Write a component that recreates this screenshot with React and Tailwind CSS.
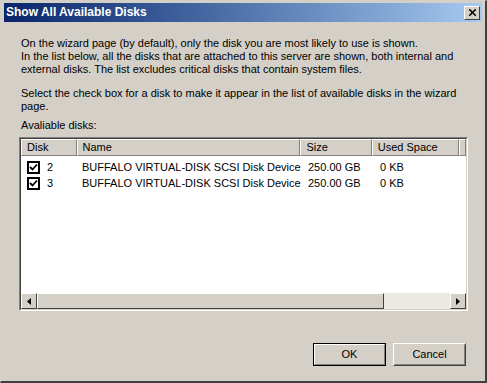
import { X } from 'lucide-react'

const disks = [
  { id: 2, name: 'BUFFALO VIRTUAL-DISK SCSI Disk Device', size: '250.00 GB', used: '0 KB' },
  { id: 3, name: 'BUFFALO VIRTUAL-DISK SCSI Disk Device', size: '250.00 GB', used: '0 KB' },
]

function Check() {
  return (
    <span className="inline-flex h-[13px] w-[13px] items-center justify-center border-2 border-black bg-white">
      <svg width="9" height="9" viewBox="0 0 9 9">
        <path d="M1 4 L3.5 6.5 L8 1.5" stroke="black" strokeWidth="1.8" fill="none" />
      </svg>
    </span>
  )
}

function HeaderCell({ w, children }) {
  return (
    <div
      className={`${w} h-[17px] flex items-center pl-[5px] whitespace-nowrap border-t border-l border-t-white border-l-white border-r border-b border-r-[#808080] border-b-[#808080] bg-[#d4d0c8]`}
    >
      {children}
    </div>
  )
}

function Arrow({ dir }) {
  return (
    <div className="w-[16px] h-[16px] flex items-center justify-center bg-[#d4d0c8] border border-t-white border-l-white border-r-[#404040] border-b-[#404040]">
      <svg width="4" height="7" viewBox="0 0 4 7">
        {dir === 'left'
          ? <path d="M4 0 L0 3.5 L4 7 Z" fill="black" />
          : <path d="M0 0 L4 3.5 L0 7 Z" fill="black" />}
      </svg>
    </div>
  )
}

export default function App() {
  return (
    <div
      className="w-[487px] h-[383px] flex flex-col bg-[#d4d0c8] border-l border-t border-l-[#d4d0c8] border-t-[#d4d0c8] border-r-2 border-b-2 border-r-[#404040] border-b-[#404040] text-black text-[11px] leading-[13px]"
      style={{ fontFamily: '"Liberation Sans", Arial, sans-serif' }}
    >
      <div className="mx-[3px] mt-[2px] h-[19px] flex items-center justify-between pl-[2px] pr-[2px] bg-gradient-to-r from-[#0a246a] to-[#a6caf0]">
        <span className="text-white font-bold text-[12px]">Show All Available Disks</span>
        <div className="w-[16px] h-[14px] flex items-center justify-center bg-[#d4d0c8] border border-t-white border-l-white border-r-[#404040] border-b-[#404040]">
          <X size={11} strokeWidth={3.5} color="black" />
        </div>
      </div>

      <div className="flex-1 flex flex-col pl-[20px] pr-[19px] pt-[15px] whitespace-nowrap">
        <p>On the wizard page (by default), only the disk you are most likely to use is shown.</p>
        <p>In the list below, all the disks that are attached to this server are shown, both internal and</p>
        <p>external disks. The list excludes critical disks that contain system files.</p>
        <p className="mt-[11px]">Select the check box for a disk to make it appear in the list of available disks in the wizard</p>
        <p>page.</p>
        <p className="mt-[6px]">Avaliable disks:</p>

        <div className="mt-[5px] -ml-[2px] w-[449px] h-[174px] flex flex-col border border-t-[#808080] border-l-[#808080] border-r-white border-b-white">
          <div className="flex-1 flex flex-col border border-t-[#404040] border-l-[#404040] border-r-[#d4d0c8] border-b-[#d4d0c8] bg-white">
            <div className="flex">
              <HeaderCell w="w-[56px]">Disk</HeaderCell>
              <HeaderCell w="w-[226px]">Name</HeaderCell>
              <HeaderCell w="w-[72px]">Size</HeaderCell>
              <HeaderCell w="w-[88px]">Used Space</HeaderCell>
              <HeaderCell w="flex-1" />
            </div>
            <div className="flex-1 pt-[3px]">
              {disks.map((d) => (
                <div key={d.id} className="flex h-[16px] items-center">
                  <div className="w-[56px] pl-[6px] flex items-center gap-[7px]">
                    <Check />
                    <span>{d.id}</span>
                  </div>
                  <div className="w-[226px] pl-[5px]">{d.name}</div>
                  <div className="w-[72px] pl-[5px]">{d.size}</div>
                  <div className="w-[88px] pl-[5px]">{d.used}</div>
                </div>
              ))}
            </div>
            <div className="flex h-[16px]">
              <Arrow dir="left" />
              <div className="w-[347px] h-[16px] bg-[#d4d0c8] border border-t-white border-l-white border-r-[#404040] border-b-[#404040]" />
              <div className="flex-1 bg-[#ebe9e4]" />
              <Arrow dir="right" />
            </div>
          </div>
        </div>

        <div className="mt-auto mb-[15px] flex justify-end gap-[7px]">
          <button className="w-[73px] h-[23px] bg-[#d4d0c8] border border-black flex">
            <span className="flex-1 flex items-center justify-center border border-t-white border-l-white border-r-[#808080] border-b-[#808080]">OK</span>
          </button>
          <button className="w-[73px] h-[23px] bg-[#d4d0c8] flex border border-t-white border-l-white border-r-[#404040] border-b-[#404040]">
            <span className="flex-1 flex items-center justify-center border border-transparent border-r-[#808080] border-b-[#808080]">Cancel</span>
          </button>
        </div>
      </div>
    </div>
  )
}
